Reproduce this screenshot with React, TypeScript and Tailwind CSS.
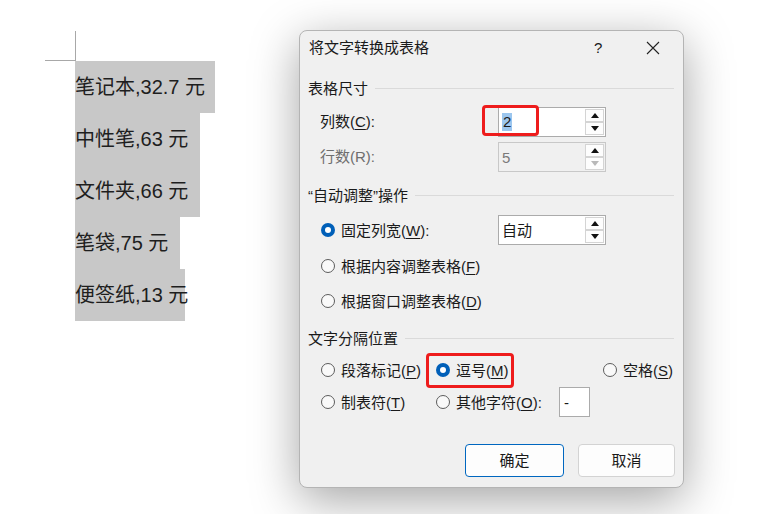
import React from "react";

const FONT = "font-['Liberation_Sans','Noto_Sans_CJK_SC',sans-serif]";

const rows = [
    { text: "笔记本,32.7 元", w: "w-[140px]" },
    { text: "中性笔,63 元", w: "w-[125px]" },
    { text: "文件夹,66 元", w: "w-[125px]" },
    { text: "笔袋,75 元", w: "w-[105px]" },
    { text: "便签纸,13 元", w: "w-[110px]" },
];

const Radio = ({ checked }: { checked?: boolean }) =>
    checked ? (
        <span className="w-[14px] h-[14px] rounded-full bg-[#005fb8] flex items-center justify-center shrink-0">
            <span className="w-[6px] h-[6px] rounded-full bg-white" />
        </span>
    ) : (
        <span className="w-[14px] h-[14px] rounded-full border border-[#5c5c5c] bg-[#f9f9f9] shrink-0" />
    );

const Arrow = ({ up, faded }: { up?: boolean; faded?: boolean }) => (
    <div className="w-[19px] h-[13px] border border-[#d4d4d4] bg-[#fdfdfd] flex items-center justify-center">
        <svg width="8" height="5" viewBox="0 0 8 5">
            <path d={up ? "M0 5 L4 0 L8 5Z" : "M0 0 L4 5 L8 0Z"} fill={faded ? "#b8b8b8" : "#111"} />
        </svg>
    </div>
);

const SpinBox = ({ children, disabled }: { children: React.ReactNode; disabled?: boolean }) => (
    <div className={`w-[108px] h-[30px] border flex ${disabled ? "border-[#c8c8c8] bg-[#f0f0f0]" : "border-[#ababab] bg-white"}`}>
        <div className="flex-1 flex items-center pl-[3px]">{children}</div>
        <div className="flex flex-col justify-center pr-px">
            <Arrow up />
            <Arrow faded={disabled} />
        </div>
    </div>
);

const Key = ({ k }: { k: string }) => <span className="underline underline-offset-2">{k}</span>;

const Section = ({ title }: { title: string }) => (
    <div className="h-[24px] flex items-center pl-[8px] pr-[9px] gap-[7px]">
        <span>{title}</span>
        <div className="flex-1 h-px bg-[#dadada]" />
    </div>
);

const Dialog = () => (
    <div className={`absolute left-[299px] top-[30px] w-[385px] h-[458px] bg-[#f0f0f0] border border-[#b4b4b4] rounded-[8px] shadow-[0_12px_48px_rgba(0,0,0,0.36)] text-[15px] leading-none text-[#1a1a1a] ${FONT}`}>
        <div className="h-[33px] flex items-center pl-[9px]">
            <span className="flex-1">将文字转换成表格</span>
            <span className="w-[20px] mr-[32px]">?</span>
            <svg width="14" height="14" viewBox="0 0 14 14" className="mr-[23px]">
                <path d="M1 1 L13 13 M13 1 L1 13" stroke="#222" strokeWidth="1.1" />
            </svg>
        </div>

        <div className="mt-[12px]"><Section title="表格尺寸" /></div>
        <div className="mt-[7px] h-[30px] flex items-center pl-[20px]">
            <span className="w-[178px] -mt-[2px]">列数(<Key k="C" />):</span>
            <SpinBox><span className="bg-[#9cc6ee] px-px leading-[18px]">2</span></SpinBox>
        </div>
        <div className="mt-[5px] h-[30px] flex items-center pl-[20px] text-[#6e6e6e]">
            <span className="w-[178px] -mt-[2px]">行数(R):</span>
            <SpinBox disabled><span className="text-[#7a7a7a]">5</span></SpinBox>
        </div>

        <div className="mt-[11px]"><Section title="“自动调整”操作" /></div>
        <div className="mt-[9px] h-[28px] flex items-center pl-[21px]">
            <Radio checked />
            <span className="ml-[6px] w-[157px]">固定列宽(<Key k="W" />):</span>
            <SpinBox>自动</SpinBox>
        </div>
        <div className="mt-[8px] h-[28px] flex items-center pl-[21px]">
            <Radio />
            <span className="ml-[6px]">根据内容调整表格(<Key k="F" />)</span>
        </div>
        <div className="mt-[7px] h-[28px] flex items-center pl-[21px]">
            <Radio />
            <span className="ml-[6px]">根据窗口调整表格(<Key k="D" />)</span>
        </div>

        <div className="mt-[11px]"><Section title="文字分隔位置" /></div>
        <div className="mt-[5px] h-[30px] flex items-center pl-[21px]">
            <div className="w-[115px] flex items-center">
                <Radio />
                <span className="ml-[6px]">段落标记(<Key k="P" />)</span>
            </div>
            <div className="w-[167px] flex items-center">
                <Radio checked />
                <span className="ml-[6px]">逗号(<Key k="M" />)</span>
            </div>
            <Radio />
            <span className="ml-[6px]">空格(<Key k="S" />)</span>
        </div>
        <div className="mt-[2px] h-[30px] flex items-center pl-[21px]">
            <div className="w-[115px] flex items-center">
                <Radio />
                <span className="ml-[6px]">制表符(<Key k="T" />)</span>
            </div>
            <Radio />
            <span className="ml-[6px] w-[103px]">其他字符(<Key k="O" />):</span>
            <div className="w-[31px] h-[30px] border border-[#ababab] bg-white flex items-center pl-[4px]">-</div>
        </div>

        <div className="mt-[27px] flex pl-[165px] gap-[14px]">
            <button className="w-[99px] h-[33px] rounded-[4px] border border-[#0067c0] bg-[#fdfdfd]">确定</button>
            <button className="w-[97px] h-[33px] rounded-[4px] border border-[#d3d3d3] bg-[#fdfdfd]">取消</button>
        </div>

        {/* red callouts */}
        <div className="absolute left-[182px] top-[74px] w-[57px] h-[31px] border-[3px] border-[#ee1c1c] rounded-[4px]" />
        <div className="absolute left-[126px] top-[322px] w-[88px] h-[35px] border-[3px] border-[#ee1c1c] rounded-[4px]" />
    </div>
);

export default function App() {
    return (
        <div className="relative w-[767px] h-[514px] bg-white overflow-hidden">
            <div className={`pl-[45px] pt-[31px] text-[20px] text-[#1e1e1e] ${FONT}`}>
                <div className="w-[31px] h-[30px] border-r border-b border-[#a8a8a8]" />
                <div className="ml-[30px]">
                    {rows.map((r) => (
                        <div key={r.text} className={`h-[52px] ${r.w} bg-[#c8c8c8] flex items-center whitespace-nowrap`}>
                            {r.text}
                        </div>
                    ))}
                </div>
            </div>
            <Dialog />
        </div>
    );
}
